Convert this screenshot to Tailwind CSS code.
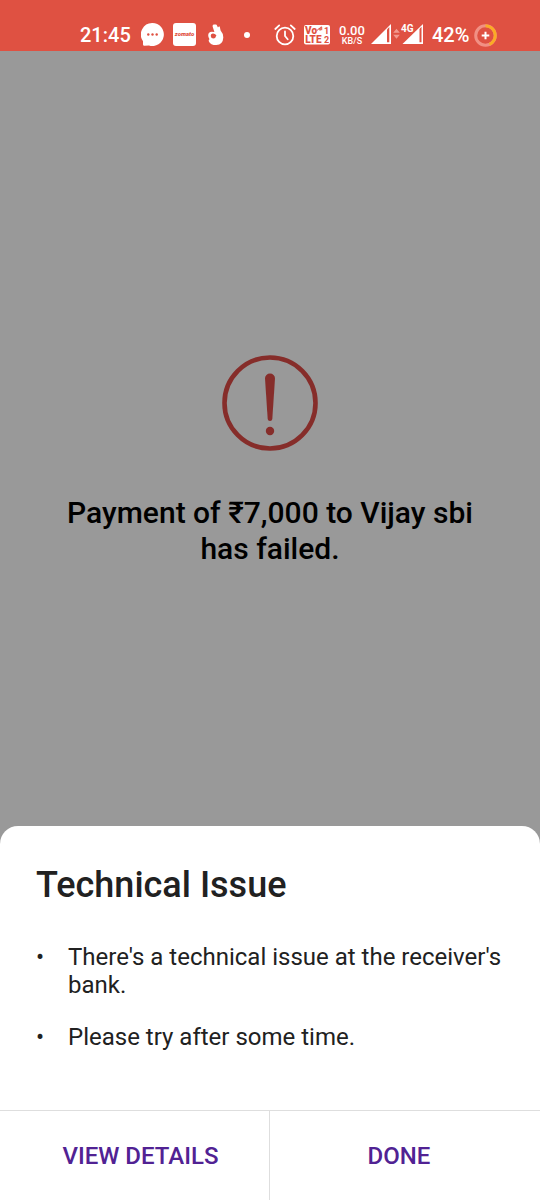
<!DOCTYPE html>
<html lang="en">
<head>
<meta charset="utf-8">
<meta name="viewport" content="width=device-width, initial-scale=1">
<title>Payment failed</title>
<script src="https://cdn.jsdelivr.net/npm/@tailwindcss/browser@4"></script>
</head>
<body class="flex min-h-screen flex-col bg-[#999999] font-['Roboto',sans-serif] text-[#212121]">
  <header class="flex items-center justify-between bg-[#df5142] pt-[21px] pr-[43px] pb-0.5 pl-20 text-white">
    <div class="flex items-center">
      <time class="w-[61px] text-xl font-medium leading-7">21:45</time>
      <svg class="mr-2 size-6" viewBox="0 0 24 24" fill="none" aria-label="Messages">
        <path fill="#fff" d="M11.5 0A11.5 11.5 0 1 1 8 22.5L3.4 22.8Q2 22.8 2 21.4V18.2A11.5 11.5 0 0 1 11.5 0Z"/>
        <g fill="#df5142"><circle cx="7.3" cy="11.5" r="1.2"/><circle cx="11.5" cy="11.5" r="1.2"/><circle cx="15.7" cy="11.5" r="1.2"/></g>
      </svg>
      <svg class="mr-[11px] size-6" viewBox="0 0 24 24" aria-label="Zomato">
        <rect width="23" height="23" rx="3" fill="#fff"/>
        <text x="11.5" y="13" text-anchor="middle" font-family="Roboto, sans-serif" font-size="6" font-weight="900" font-style="italic" fill="#df5142">zomato</text>
      </svg>
      <svg class="mr-5 h-6 w-4" viewBox="0 0 16 24" aria-label="OK hand">
        <path fill="#fff" fill-rule="evenodd" d="M4.6 3.4Q4.4 1.6 5.8 1.6 6.6 1.2 7.6 1.6 8.6 1.4 9.2 3L10 4.6Q10.6 3 11.7 3.6L12.6 7.4Q15.4 10.4 15.3 14.5 15 21.6 8.3 22 2.4 22 .9 18.4 .2 16.8 1.5 16.2 .2 14.5.2 12.2.3 8.8 3.8 8.7L6.4 8.9ZM4.8 10.6Q2.6 10.8 2.7 12.9 3.1 15.4 5.4 15.4 7.8 15.2 8.4 12.2Q6.6 10.4 4.8 10.6Z"/>
      </svg>
      <span class="size-[6px] rounded-full bg-white"></span>
    </div>
    <div class="flex items-center">
      <svg class="mr-2 h-6 w-[22px]" viewBox="0 0 22 24" fill="none" stroke="#fff" stroke-width="1.8" stroke-linecap="round" aria-label="Alarm">
        <circle cx="11" cy="13" r="8.3"/><path d="M11 8.5V13l2.7 3.3M1.3 6 5.2 2.4M20.7 6 16.8 2.4"/>
      </svg>
      <svg class="mr-[7px] h-5 w-[27px]" viewBox="0 0 27 20" aria-label="VoLTE on SIM 1 and 2">
        <rect width="26" height="19.5" rx="2" fill="#fff"/>
        <g fill="#df5142" font-family="Roboto, sans-serif" font-size="10" font-weight="900">
          <text x="1" y="9">Vo</text><text x="1.2" y="18">LTE</text>
          <text x="20" y="8.7" font-size="9" font-weight="700">1</text><text x="20" y="18" font-size="9" font-weight="700">2</text>
        </g>
        <path d="M13.5 5.5q.5-2 2.4-2.2v2M16.2 5.5v-3l1.5-.6v3.3" fill="none" stroke="#df5142"/>
      </svg>
      <div class="mr-1 flex w-7 flex-col items-center font-medium">
        <span class="text-[13px] leading-3">0.00</span><span class="text-[9px] leading-[9px]">KB/S</span>
      </div>
      <svg class="h-6 w-[54px]" viewBox="0 0 54 24" aria-label="Signal strength">
        <path fill="#fff" d="M21 1V21H1Z"/><path fill="#df5142" d="M17 6.5 19.3 4V19.3H17Z"/>
        <path fill="#f39a90" d="m26.5 5.8 3.3 4h-6.6ZM26.5 15.8l3.3-4h-6.6Z"/>
        <path fill="#fff" d="M53 1V21H32.5Z"/><path fill="#df5142" d="M49.5 6 51.5 3.8V19.3H49.5Z"/>
        <path fill="#df5142" d="M31 0H44V8.8H31Z"/>
        <text x="31" y="8.5" font-family="Roboto, sans-serif" font-size="10" font-weight="700" fill="#fff">4G</text>
      </svg>
      <span class="mr-[5px] ml-2 w-[37px] text-xl font-medium leading-7">42%</span>
      <svg class="size-[23px]" viewBox="0 0 23 23" fill="none" aria-label="Battery">
        <circle cx="11.5" cy="11.5" r="9.8" stroke="#f19084" stroke-width="3"/>
        <path d="M11.5 1.7a9.8 9.8 0 0 1 4 18.7" stroke="#fbab25" stroke-width="3"/>
        <path d="M11.5 7.7v7.6M7.7 11.5h7.6" stroke="#fff" stroke-width="2"/>
      </svg>
    </div>
  </header>

  <main class="flex flex-1 flex-col items-center justify-center px-14 pb-5 pt-16 text-center text-black">
    <svg class="size-24" viewBox="0 0 96 96" fill="none" role="img" aria-label="Failed">
      <circle cx="48" cy="48" r="45.5" stroke="#862d2a" stroke-width="4.6"/>
      <path fill="#862d2a" d="M43 23.5a5 5 0 0 1 10 0L50.3 64q-.2 2-2.3 2t-2.3-2Z"/>
      <circle cx="48" cy="76" r="4.2" fill="#862d2a"/>
    </svg>
    <h1 class="mt-11 text-[30px] font-medium leading-9">Payment of ₹7,000 to Vijay sbi has failed.</h1>
  </main>

  <section class="rounded-t-[18px] bg-white" aria-labelledby="issue-title">
    <div class="px-9 pt-9 pb-[59px]">
      <h2 id="issue-title" class="text-4xl font-medium leading-[46px]">Technical Issue</h2>
      <ul class="mt-[35px] flex flex-col gap-6 text-2xl leading-7">
        <li class="flex"><span class="w-8 shrink-0">•</span><span>There's a technical issue at the receiver's bank.</span></li>
        <li class="flex"><span class="w-8 shrink-0">•</span><span>Please try after some time.</span></li>
      </ul>
    </div>
    <div class="grid grid-cols-2 divide-x divide-[#dedede] border-t border-[#dedede] text-2xl font-medium text-[#512293]">
      <button type="button" class="h-[89px] pl-3">VIEW DETAILS</button>
      <button type="button" class="h-[89px] pr-3">DONE</button>
    </div>
  </section>
</body>
</html>
